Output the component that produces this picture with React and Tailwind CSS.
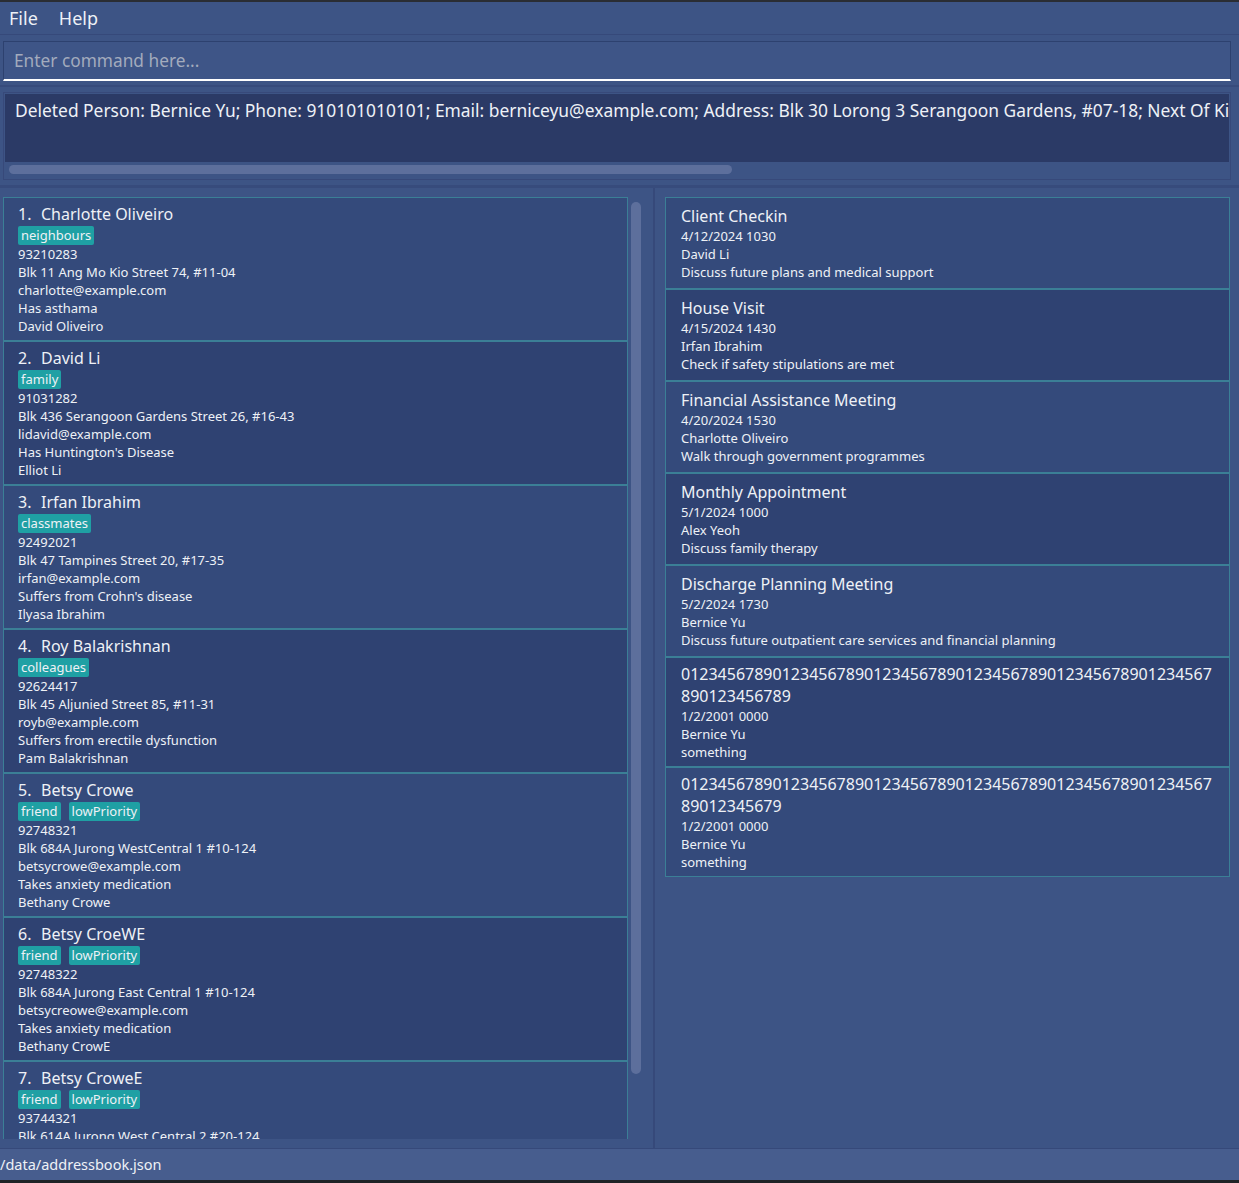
import React from "react";

const persons = [
  {
    name: "Charlotte Oliveiro",
    tags: ["neighbours"],
    phone: "93210283",
    address: "Blk 11 Ang Mo Kio Street 74, #11-04",
    email: "charlotte@example.com",
    note: "Has asthama",
    kin: "David Oliveiro",
  },
  {
    name: "David Li",
    tags: ["family"],
    phone: "91031282",
    address: "Blk 436 Serangoon Gardens Street 26, #16-43",
    email: "lidavid@example.com",
    note: "Has Huntington's Disease",
    kin: "Elliot Li",
  },
  {
    name: "Irfan Ibrahim",
    tags: ["classmates"],
    phone: "92492021",
    address: "Blk 47 Tampines Street 20, #17-35",
    email: "irfan@example.com",
    note: "Suffers from Crohn's disease",
    kin: "Ilyasa Ibrahim",
  },
  {
    name: "Roy Balakrishnan",
    tags: ["colleagues"],
    phone: "92624417",
    address: "Blk 45 Aljunied Street 85, #11-31",
    email: "royb@example.com",
    note: "Suffers from erectile dysfunction",
    kin: "Pam Balakrishnan",
  },
  {
    name: "Betsy Crowe",
    tags: ["friend", "lowPriority"],
    phone: "92748321",
    address: "Blk 684A Jurong WestCentral 1 #10-124",
    email: "betsycrowe@example.com",
    note: "Takes anxiety medication",
    kin: "Bethany Crowe",
  },
  {
    name: "Betsy CroeWE",
    tags: ["friend", "lowPriority"],
    phone: "92748322",
    address: "Blk 684A Jurong East Central 1 #10-124",
    email: "betsycreowe@example.com",
    note: "Takes anxiety medication",
    kin: "Bethany CrowE",
  },
  {
    name: "Betsy CroweE",
    tags: ["friend", "lowPriority"],
    phone: "93744321",
    address: "Blk 614A Jurong West Central 2 #20-124",
    email: "betsycrowee@example.com",
    note: "Takes anxiety medication",
    kin: "Bethany CroweE",
  },
];

const appointments = [
  { title: "Client Checkin", when: "4/12/2024 1030", who: "David Li", desc: "Discuss future plans and medical support" },
  { title: "House Visit", when: "4/15/2024 1430", who: "Irfan Ibrahim", desc: "Check if safety stipulations are met" },
  { title: "Financial Assistance Meeting", when: "4/20/2024 1530", who: "Charlotte Oliveiro", desc: "Walk through government programmes" },
  { title: "Monthly Appointment", when: "5/1/2024 1000", who: "Alex Yeoh", desc: "Discuss family therapy" },
  { title: "Discharge Planning Meeting", when: "5/2/2024 1730", who: "Bernice Yu", desc: "Discuss future outpatient care services and financial planning" },
  {
    title: "0123456789012345678901234567890123456789012345678901234567 890123456789",
    when: "1/2/2001 0000",
    who: "Bernice Yu",
    desc: "something",
  },
  {
    title: "0123456789012345678901234567890123456789012345678901234567 89012345679",
    when: "1/2/2001 0000",
    who: "Bernice Yu",
    desc: "something",
  },
];

function PersonCard({ person, index }) {
  const odd = index % 2 === 0;
  return (
    <div
      className={`h-[144px] shrink-0 border border-[#3b7f96] px-[14px] pt-[5px] ${
        odd ? "bg-[#344a7b]" : "bg-[#2f4272]"
      }`}
    >
      <div className="flex text-[16px] leading-[22px]">
        <span className="w-[23px]">{index + 1}.</span>
        <span>{person.name}</span>
      </div>
      <div className="mt-px flex h-[19px] gap-[8px]">
        {person.tags.map((t) => (
          <span key={t} className="rounded-[2px] bg-[#1fa0a4] px-[3px] text-[13px] leading-[19px]">
            {t}
          </span>
        ))}
      </div>
      <div className="text-[13px] leading-[18px]">
        <div>{person.phone}</div>
        <div>{person.address}</div>
        <div>{person.email}</div>
        <div>{person.note}</div>
        <div>{person.kin}</div>
      </div>
    </div>
  );
}

function AppointmentCard({ appt, index }) {
  const odd = index % 2 === 0;
  // long titles wrap onto two lines and the card keeps a tighter padding
  const long = appt.title.length > 50;
  return (
    <div
      className={`border border-[#3b7f96] pl-[15px] pr-[8px] ${long ? "pt-[5px] pb-[5px]" : "pt-[7px] pb-[7px]"} ${
        odd ? "bg-[#344a7b]" : "bg-[#2f4272]"
      }`}
    >
      <div className="break-words text-[16px] leading-[22px]">{appt.title}</div>
      <div className="text-[13px] leading-[18px]">
        <div>{appt.when}</div>
        <div>{appt.who}</div>
        <div>{appt.desc}</div>
      </div>
    </div>
  );
}

export default function App() {
  return (
    <div className="flex h-[1183px] w-full flex-col overflow-hidden bg-[#3d5485] font-['Noto_Sans','Open_Sans',sans-serif] text-[#eef1f6]">
      <div className="h-[2px] bg-[#2a2d33]" />

      {/* menu bar */}
      <div className="flex h-[33px] items-center gap-[21px] border-b border-[#36497a] px-[9px] text-[18px]">
        <span>File</span>
        <span>Help</span>
      </div>

      {/* command box */}
      <div className="border-b-2 border-[#374b7c] pl-[3px] pr-[8px] pt-[6px] pb-[4px]">
        <div className="flex h-[40px] items-center border border-b-2 border-[#2d416f] border-b-white bg-[#3e5587] pl-[10px] text-[17.3px] text-[#a3abbd]">
          Enter command here...
        </div>
      </div>

      {/* result display */}
      <div className="border-b-[3px] border-[#374b7c] pl-[3px] pr-[8px] pt-[5px] pb-[5px]">
        <div className="border border-[#37497a] p-px pb-[5px]">
          <div className="h-[68px] overflow-hidden whitespace-nowrap bg-[#2b3a66] px-[10px] pt-[4px] text-[17.4px] leading-[24px]">
            Deleted Person: Bernice Yu; Phone: 910101010101; Email: berniceyu@example.com; Address: Blk 30 Lorong 3
            Serangoon Gardens, #07-18; Next Of Kin: Bernard Yu
          </div>
          <div className="px-[4px] pt-[3px]">
            <div className="h-[9px] w-[723px] rounded-full bg-[#5d6f9c]" />
          </div>
        </div>
      </div>

      {/* lower panels */}
      <div className="flex min-h-0 flex-1">
        <div className="flex w-[653px] shrink-0 pl-[3px] pt-[9px] pb-[9px]">
          <div className="flex w-[625px] shrink-0 flex-col overflow-hidden">
            {persons.map((p, i) => (
              <PersonCard key={i} person={p} index={i} />
            ))}
          </div>
          <div className="pl-[3px] pt-[5px]">
            <div className="h-[872px] w-[10px] rounded-full bg-[#5d6f9c]" />
          </div>
        </div>
        <div className="w-[2px] shrink-0 bg-[#36497a]" />
        <div className="flex min-w-0 flex-1 flex-col pl-[10px] pr-[9px] pt-[9px]">
          {appointments.map((a, i) => (
            <AppointmentCard key={i} appt={a} index={i} />
          ))}
        </div>
      </div>

      {/* status bar */}
      <div className="flex h-[32px] items-center border-t border-[#36497a] bg-[#475d8e] text-[14.5px]">
        /data/addressbook.json
      </div>
      <div className="h-[3px] bg-[#1f2326]" />
    </div>
  );
}
